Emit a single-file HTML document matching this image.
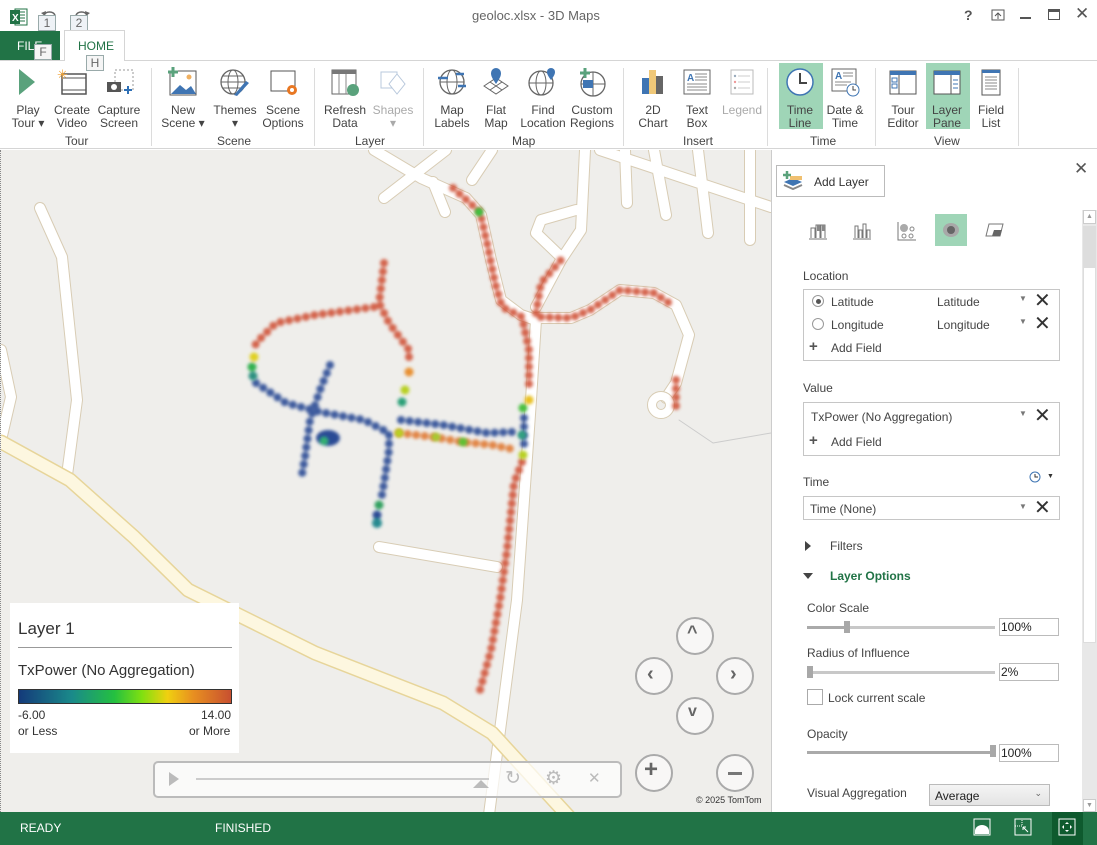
<!DOCTYPE html>
<html><head><meta charset="utf-8"><style>
*{margin:0;padding:0;box-sizing:border-box}
body{width:1097px;height:845px;overflow:hidden;background:#fff;font-family:"Liberation Sans",sans-serif;color:#444;position:relative}
.a{position:absolute}
.t{position:absolute;font-size:12px;color:#444;white-space:nowrap}
.btn{position:absolute;top:64px;width:46px;text-align:center;font-size:12px;line-height:13px;color:#444}
.btn svg{display:block;margin:2px auto 6px}
.gl{position:absolute;top:134px;font-size:12px;color:#444}
.sep{position:absolute;top:68px;width:1px;height:78px;background:#dcdcdc}
.box{position:absolute;border:1px solid #c6c6c6;background:#fff}
.kt{position:absolute;border:1px solid #9aa;background:#eef2f6;font-size:12px;color:#666;text-align:center;line-height:14px}
.inp{position:absolute;border:1px solid #bbb;background:#fff;font-size:12px;color:#222;padding:2px 1px;line-height:13px}
.sl{position:absolute;height:3px;background:#c8c8c8}
.th{position:absolute;width:6px;height:12px;background:#a8a8a8}
.nav{position:absolute;width:38px;height:38px;border-radius:50%;border:2px solid #aaa;background:rgba(255,255,255,.55)}
</style></head><body>

<svg class="a" style="left:9px;top:7px" width="20" height="20" viewBox="0 0 20 20"><rect x="6" y="2" width="12" height="16" fill="#fff" stroke="#217346"/><path d="M10 5h6M10 8h6M10 11h6M10 14h6" stroke="#217346"/><rect x="1" y="3" width="10" height="14" fill="#217346"/><text x="3" y="14" font-size="10" fill="#fff" font-family="Liberation Sans" font-weight="bold">X</text></svg>
<svg class="a" style="left:40px;top:6px" width="18" height="12"><path d="M4 9 A6 5 0 0 1 15 9" fill="none" stroke="#666" stroke-width="1.6"/><path d="M1 7l4 3 1-5z" fill="#666"/></svg>
<svg class="a" style="left:73px;top:6px" width="18" height="12"><path d="M3 9 A6 5 0 0 1 14 9" fill="none" stroke="#666" stroke-width="1.6"/><path d="M17 7l-4 3-1-5z" fill="#666"/></svg>
<div class="kt" style="left:38px;top:15px;width:18px;height:16px">1</div>
<div class="kt" style="left:70px;top:15px;width:18px;height:16px">2</div>
<div class="t" style="left:472px;top:8px;font-size:13px;color:#666">geoloc.xlsx - 3D Maps</div>
<div class="t" style="left:964px;top:7px;font-size:14px;color:#555;font-weight:bold">?</div>
<svg class="a" style="left:991px;top:9px" width="14" height="12"><rect x="1" y="1" width="12" height="10" fill="none" stroke="#555"/><path d="M4 7l3-3 3 3M7 4v6" stroke="#555" fill="none"/></svg>
<div class="a" style="left:1020px;top:17px;width:11px;height:2px;background:#555"></div>
<div class="a" style="left:1048px;top:9px;width:12px;height:11px;border:1.5px solid #555;border-top-width:3px"></div>
<div class="t" style="left:1075px;top:4px;font-size:17px;color:#555">✕</div>

<div class="a" style="left:0;top:31px;width:60px;height:30px;background:#217346"></div>
<div class="t" style="left:17px;top:39px;color:#fff;font-size:12px">FILE</div>
<div class="kt" style="left:34px;top:44px;width:18px;height:16px;background:#f5f5f5">F</div>
<div class="a" style="left:64px;top:30px;width:61px;height:31px;border:1px solid #d5d5d5;border-bottom:none;background:#fff"></div>
<div class="t" style="left:78px;top:39px;color:#217346">HOME</div>
<div class="kt" style="left:86px;top:55px;width:18px;height:16px;background:#f5f5f5">H</div>
<div class="a" style="left:125px;top:60px;width:972px;height:1px;background:#d5d5d5"></div>
<div class="a" style="left:0;top:60px;width:64px;height:1px;background:#d5d5d5"></div>

<div class="a" style="left:779px;top:63px;width:44px;height:66px;background:#9fd5b7"></div>
<div class="a" style="left:926px;top:63px;width:44px;height:66px;background:#9fd5b7"></div>

<div class="btn" style="left:5px"><svg width="32" height="32"><path d="M7 3l16 13-16 13z" fill="#5aa27c"/></svg>Play<br>Tour ▾</div>
<div class="btn" style="left:49px"><svg width="32" height="32"><rect x="6" y="8" width="24" height="20" fill="#fff" stroke="#555" stroke-width="1.5"/><path d="M6 12h24M6 24h24" stroke="#555"/><text x="1" y="13" font-size="13" fill="#f0a030">✳</text></svg>Create<br>Video</div>
<div class="btn" style="left:96px"><svg width="32" height="32"><rect x="12" y="4" width="18" height="20" fill="none" stroke="#999" stroke-dasharray="2 2"/><rect x="4" y="16" width="14" height="10" fill="#555"/><circle cx="11" cy="21" r="3" fill="#fff"/><path d="M25 20v8M21 24h8" stroke="#2e6fb5" stroke-width="2"/></svg>Capture<br>Screen</div>
<div class="sep" style="left:151px"></div>
<div class="btn" style="left:160px"><svg width="32" height="32"><rect x="3" y="5" width="26" height="24" fill="#fff" stroke="#555"/><path d="M4 28l9-9 6 5 5-4 5 8z" fill="#3f75b3"/><circle cx="22" cy="11" r="2.5" fill="#f0b060"/><path d="M6 1v10M1 6h10" stroke="#5aa27c" stroke-width="3"/></svg>New<br>Scene ▾</div>
<div class="btn" style="left:212px"><svg width="32" height="32"><circle cx="14" cy="16" r="12" fill="none" stroke="#666" stroke-width="1.3"/><ellipse cx="14" cy="16" rx="5" ry="12" fill="none" stroke="#666"/><path d="M2 16h24M4 10h20M4 22h20" stroke="#666"/><path d="M15 29l12-14 3 2-12 13z" fill="#3f75b3"/></svg>Themes<br>▾</div>
<div class="btn" style="left:260px"><svg width="32" height="32"><rect x="4" y="5" width="24" height="20" fill="#fff" stroke="#555"/><circle cx="25" cy="24" r="5" fill="#e87722"/><circle cx="25" cy="24" r="2" fill="#fff"/></svg>Scene<br>Options</div>
<div class="sep" style="left:314px"></div>
<div class="btn" style="left:322px"><svg width="32" height="32"><rect x="3" y="4" width="24" height="24" fill="#fff" stroke="#666"/><rect x="3" y="4" width="24" height="4" fill="#777"/><path d="M10 8v20M17 8v20" stroke="#888"/><circle cx="24" cy="24" r="6" fill="#5aa27c"/></svg>Refresh<br>Data</div>
<div class="btn" style="left:370px;color:#aaa"><svg width="32" height="32"><rect x="4" y="6" width="16" height="16" fill="none" stroke="#b8c8dc"/><path d="M20 8l8 10-8 10-8-10z" fill="#fff" stroke="#b8c8dc"/></svg>Shapes<br>▾</div>
<div class="sep" style="left:423px"></div>
<div class="btn" style="left:429px"><svg width="32" height="32"><circle cx="16" cy="16" r="12" fill="none" stroke="#666" stroke-width="1.3"/><ellipse cx="16" cy="16" rx="5" ry="12" fill="none" stroke="#666"/><path d="M4 16h24" stroke="#666"/><path d="M2 12h10M20 8h8M22 20h8" stroke="#3f75b3" stroke-width="2.5"/></svg>Map<br>Labels</div>
<div class="btn" style="left:473px"><svg width="32" height="32"><path d="M4 20l12-8 12 8-12 8z" fill="#fff" stroke="#666"/><path d="M10 16l12 8M22 16l-12 8" stroke="#666"/><path d="M16 18c-4-6-5-8-5-11a5 5 0 0 1 10 0c0 3-1 5-5 11z" fill="#3f75b3"/></svg>Flat<br>Map</div>
<div class="btn" style="left:520px"><svg width="32" height="32"><circle cx="14" cy="17" r="12" fill="none" stroke="#666" stroke-width="1.3"/><ellipse cx="14" cy="17" rx="5" ry="12" fill="none" stroke="#666"/><path d="M2 17h24" stroke="#666"/><path d="M24 14c-3-4-4-6-4-8a4 4 0 0 1 8 0c0 2-1 4-4 8z" fill="#3f75b3"/></svg>Find<br>Location</div>
<div class="btn" style="left:569px"><svg width="32" height="32"><circle cx="17" cy="18" r="12" fill="none" stroke="#666" stroke-width="1.3"/><path d="M5 18h24M17 6v24" stroke="#666"/><path d="M7 14h10v8H7z" fill="#3f75b3"/><path d="M9 2v10M4 7h10" stroke="#5aa27c" stroke-width="3"/></svg>Custom<br>Regions</div>
<div class="sep" style="left:623px"></div>
<div class="btn" style="left:630px"><svg width="32" height="32"><rect x="5" y="12" width="7" height="16" fill="#3f75b3"/><rect x="12" y="4" width="7" height="24" fill="#f0c878"/><rect x="19" y="10" width="7" height="18" fill="#666"/></svg>2D<br>Chart</div>
<div class="btn" style="left:674px"><svg width="32" height="32"><rect x="3" y="4" width="26" height="24" fill="#fff" stroke="#666"/><text x="6" y="15" font-size="10" fill="#3f75b3" font-weight="bold" font-family="Liberation Sans">A</text><path d="M14 8h12M14 11h12M14 14h12M6 18h20M6 21h20M6 24h20" stroke="#888"/></svg>Text<br>Box</div>
<div class="btn" style="left:719px;color:#aaa"><svg width="32" height="32"><rect x="5" y="4" width="22" height="24" fill="#fff" stroke="#bbb"/><path d="M12 10h12M12 16h12M12 22h12" stroke="#ccc"/><circle cx="9" cy="10" r="1.2" fill="#9ab"/><circle cx="9" cy="16" r="1.2" fill="#e99"/><circle cx="9" cy="22" r="1.2" fill="#aaa"/></svg>Legend</div>
<div class="sep" style="left:767px"></div>
<div class="btn" style="left:777px"><svg width="32" height="32"><circle cx="16" cy="16" r="13" fill="#fff" stroke="#3f75b3" stroke-width="1.5"/><path d="M16 7v10h7" stroke="#444" stroke-width="2" fill="none"/></svg>Time<br>Line</div>
<div class="btn" style="left:822px"><svg width="32" height="32"><rect x="3" y="3" width="24" height="22" fill="#fff" stroke="#666"/><text x="6" y="13" font-size="10" fill="#3f75b3" font-weight="bold" font-family="Liberation Sans">A</text><path d="M14 7h10M14 10h10M6 16h16M6 19h12" stroke="#888"/><circle cx="24" cy="24" r="6" fill="#fff" stroke="#3f75b3"/><path d="M24 20v4h3" stroke="#444" fill="none"/></svg>Date &amp;<br>Time</div>
<div class="sep" style="left:875px"></div>
<div class="btn" style="left:880px"><svg width="32" height="32"><rect x="3" y="5" width="26" height="23" fill="#fff" stroke="#555"/><rect x="3" y="5" width="26" height="4" fill="#3f75b3"/><path d="M12 9v19" stroke="#555"/><rect x="5" y="12" width="5" height="4" fill="none" stroke="#3f75b3"/><rect x="5" y="18" width="5" height="4" fill="none" stroke="#3f75b3"/></svg>Tour<br>Editor</div>
<div class="btn" style="left:924px"><svg width="32" height="32"><rect x="3" y="5" width="26" height="23" fill="#fff" stroke="#555"/><rect x="3" y="5" width="26" height="4" fill="#3f75b3"/><path d="M20 9v19" stroke="#555"/><path d="M22 14h5M22 18h5M22 22h5" stroke="#3f75b3"/></svg>Layer<br>Pane</div>
<div class="btn" style="left:968px"><svg width="32" height="32"><rect x="7" y="4" width="18" height="25" fill="#fff" stroke="#555"/><rect x="7" y="4" width="18" height="3" fill="#3f75b3"/><path d="M10 11h12M10 14h12M10 17h12M10 20h12M10 23h12" stroke="#888"/></svg>Field<br>List</div>
<div class="sep" style="left:1018px"></div>

<div class="gl" style="left:65px">Tour</div>
<div class="gl" style="left:217px">Scene</div>
<div class="gl" style="left:355px">Layer</div>
<div class="gl" style="left:512px">Map</div>
<div class="gl" style="left:683px">Insert</div>
<div class="gl" style="left:810px">Time</div>
<div class="gl" style="left:934px">View</div>
<div class="a" style="left:0;top:148px;width:1097px;height:1px;background:#d5d5d5"></div>

<div class="a" style="left:0;top:150px;width:771px;height:662px;overflow:hidden;background:#efeeeb;border-left:1px dotted #888">
<svg class="a" style="left:0;top:-150px" width="1097" height="845" viewBox="0 0 1097 845">
<defs><filter id="b" x="-20%" y="-20%" width="140%" height="140%"><feGaussianBlur stdDeviation="1.5"/></filter></defs>
<g fill="none" stroke-linecap="round" stroke-linejoin="round">
<g stroke="#d8ccb4" stroke-width="12">
<path d="M39 208L61 257L76 400L66 475"/>
<path d="M373 150L420 178L465 198L480 215L490 260L500 300L520 315L535 320L530 400L516 600L486 830"/>
<path d="M383 198L445 150M432 182L444 212M471 180L491 150"/>
<path d="M584 150L580 230L560 260L535 307M560 257L535 233L540 220L575 210"/>
<path d="M535 318L570 318L589 310L619 290L653 293L675 305L688 335L675 383L665 398"/>
<path d="M624 150L626 203M653 150L665 215M697 150L707 233M749 150L749 240M599 150L770 207"/>
<path d="M378 547L496 567"/>
<path d="M0 350L10 397L0 440"/>
</g>
<g stroke="#fff" stroke-width="10">
<path d="M39 208L61 257L76 400L66 475"/>
<path d="M373 150L420 178L465 198L480 215L490 260L500 300L520 315L535 320L530 400L516 600L486 830"/>
<path d="M383 198L445 150M432 182L444 212M471 180L491 150"/>
<path d="M584 150L580 230L560 260L535 307M560 257L535 233L540 220L575 210"/>
<path d="M535 318L570 318L589 310L619 290L653 293L675 305L688 335L675 383L665 398"/>
<path d="M624 150L626 203M653 150L665 215M697 150L707 233M749 150L749 240M599 150L770 207"/>
<path d="M378 547L496 567"/>
<path d="M0 350L10 397L0 440"/>
</g>
<circle cx="660" cy="405" r="9" stroke="#d8ccb4" stroke-width="10"/><circle cx="660" cy="405" r="9" stroke="#fff" stroke-width="8"/>
<path d="M678 420L712 443L770 433" stroke="#ccc" stroke-width="1"/>
<path d="M0 442L69 480L133 537L187 590L314 653L442 703L491 733L580 830" stroke="#e7d59a" stroke-width="15"/>
<path d="M0 442L69 480L133 537L187 590L314 653L442 703L491 733L580 830" stroke="#fdf7e0" stroke-width="12"/>
</g>
<g fill="none" stroke-linecap="round" stroke-linejoin="round" stroke-width="8" stroke-dasharray="0.1 8.5" filter="url(#b)" opacity="0.9">
<path stroke="#d0553a" d="M452 188L479 212L486 243L494 283L501 307L521 317L528 350L528 392"/>
<path stroke="#2b4b95" d="M523 418L523 445"/>
<path stroke="#d0553a" d="M521 462L513 483L506 550L499 600L490 650L479 690"/>
<path stroke="#d0553a" d="M535 313L540 283L560 260"/>
<path stroke="#d0553a" d="M540 317L570 318L589 310L619 290L653 293L668 303"/>
<path stroke="#d0553a" d="M675 380L675 410"/>
<path stroke="#d0553a" d="M383 263L378 303L388 323L408 350L408 362"/>
<path stroke="#2b4b95" d="M400 420L442 425L486 433L511 432"/>
<path stroke="#e07a35" d="M398 433L432 437L462 442L491 445L516 450"/>
<path stroke="#d0553a" d="M373 307L314 315L275 323L255 343L253 352"/>
<path stroke="#2b4b95" d="M255 383L285 403L319 412L363 420L388 433L388 450L383 483L380 500"/>
<path stroke="#2b4b95" d="M329 365L319 390L309 420L304 457L300 480"/>
</g>
<g filter="url(#b)">
<circle cx="528" cy="400" r="4.5" fill="#e9c020"/><circle cx="522" cy="408" r="4.5" fill="#49c040"/><circle cx="522" cy="455" r="4.5" fill="#b8d020"/>
<circle cx="408" cy="372" r="4.5" fill="#e89030"/><circle cx="404" cy="390" r="4.5" fill="#b8d020"/><circle cx="401" cy="402" r="4.5" fill="#2aa078"/>
<circle cx="398" cy="433" r="4.5" fill="#b8d020"/><circle cx="462" cy="442" r="4.5" fill="#60c030"/><circle cx="435" cy="437" r="4.5" fill="#a8c830"/>
<circle cx="253" cy="357" r="4.5" fill="#e0d020"/><circle cx="251" cy="367" r="4.5" fill="#30b050"/><circle cx="252" cy="376" r="4.5" fill="#2a9080"/>
<circle cx="378" cy="505" r="4.5" fill="#30a060"/><circle cx="376" cy="515" r="4.5" fill="#2a4b95"/><circle cx="376" cy="523" r="5" fill="#258a90"/>
<circle cx="478" cy="212" r="4.5" fill="#40c040"/>
<ellipse cx="327" cy="438" rx="12" ry="8" fill="#2b4b95"/><circle cx="323" cy="441" r="4" fill="#30b070"/>
<circle cx="521" cy="435" r="4.5" fill="#30a080"/>
</g>
</svg>

<div class="a" style="left:9px;top:453px;width:229px;height:150px;background:#fff"></div>
<div class="t" style="left:17px;top:469px;font-size:17px;color:#333">Layer 1</div>
<div class="a" style="left:17px;top:497px;width:214px;height:1px;background:#999"></div>
<div class="t" style="left:17px;top:512px;font-size:15px;color:#333">TxPower (No Aggregation)</div>
<div class="a" style="left:17px;top:539px;width:214px;height:15px;border:1px solid #333;background:linear-gradient(90deg,#143a7a,#1a8a8a 25%,#24c040 45%,#80e010 58%,#f0d010 70%,#e89020 82%,#c85030)"></div>
<div class="t" style="left:17px;top:558px;color:#333">-6.00</div>
<div class="t" style="left:17px;top:574px;color:#333">or Less</div>
<div class="t" style="left:200px;top:558px;color:#333">14.00</div>
<div class="t" style="left:188px;top:574px;color:#333">or More</div>

<div class="nav" style="left:675px;top:467px"></div><div class="t" style="left:686px;top:472px;font-size:18px;color:#666;font-weight:bold">^</div>
<div class="nav" style="left:634px;top:507px"></div><div class="t" style="left:646px;top:513px;font-size:20px;color:#666;font-weight:bold">‹</div>
<div class="nav" style="left:715px;top:507px"></div><div class="t" style="left:729px;top:513px;font-size:20px;color:#666;font-weight:bold">›</div>
<div class="nav" style="left:675px;top:547px"></div><div class="t" style="left:687px;top:553px;font-size:16px;color:#666;font-weight:bold">v</div>
<div class="nav" style="left:634px;top:604px"></div><div class="t" style="left:643px;top:606px;font-size:24px;color:#666;font-weight:bold">+</div>
<div class="nav" style="left:715px;top:604px"></div><div class="a" style="left:727px;top:622px;width:14px;height:3px;background:#777"></div>
<div class="t" style="left:695px;top:645px;font-size:9px;color:#333">© 2025 TomTom</div>

<div class="a" style="left:152px;top:611px;width:469px;height:37px;border:2px solid #bbb;border-radius:5px;background:rgba(255,255,255,.7)"></div>
<div class="a" style="left:168px;top:622px;width:0;height:0;border-left:10px solid #bbb;border-top:7px solid transparent;border-bottom:7px solid transparent"></div>
<div class="a" style="left:195px;top:628px;width:293px;height:2px;background:#ccc"></div>
<div class="a" style="left:472px;top:630px;width:0;height:0;border-bottom:8px solid #bbb;border-left:8px solid transparent;border-right:8px solid transparent"></div>
<div class="t" style="left:504px;top:617px;font-size:19px;color:#bbb">↻</div>
<div class="t" style="left:544px;top:617px;font-size:19px;color:#bbb">⚙</div>
<div class="t" style="left:587px;top:619px;font-size:15px;color:#bbb">✕</div>
</div>
<div class="a" style="left:771px;top:150px;width:1px;height:662px;background:#ccc"></div>

<div class="box" style="left:776px;top:165px;width:109px;height:32px;border-color:#bbb"></div>
<svg class="a" style="left:782px;top:170px" width="22" height="20"><path d="M2 12l9-4 9 4-9 4z" fill="#3f75b3"/><path d="M2 15l9 4 9-4" stroke="#888" fill="none" stroke-width="2"/><path d="M8 6h12v4H8z" fill="#f0c070"/><path d="M5 1v8M1 5h8" stroke="#5aa27c" stroke-width="2.5"/></svg>
<div class="t" style="left:814px;top:175px;font-size:12px;color:#333">Add Layer</div>
<div class="t" style="left:1074px;top:159px;font-size:17px;color:#555">✕</div>

<div class="a" style="left:1082px;top:210px;width:15px;height:602px;background:#e8e8e8"></div>
<div class="a" style="left:1083px;top:226px;width:13px;height:417px;background:#fff;border:1px solid #ddd"></div>
<div class="a" style="left:1083px;top:226px;width:13px;height:42px;background:#ddd"></div>
<div class="a" style="left:1083px;top:210px;width:13px;height:14px;background:#fff;border:1px solid #ccc;font-size:7px;color:#999;text-align:center;line-height:12px">▲</div>
<div class="a" style="left:1083px;top:799px;width:13px;height:13px;background:#fff;border:1px solid #ccc;font-size:7px;color:#999;text-align:center;line-height:12px">▼</div>

<svg class="a" style="left:808px;top:221px" width="20" height="20"><path d="M1 18h18M3 17V7h4v10M8 17V4h4v13M13 17V4h4v13" stroke="#777" fill="none"/><rect x="9" y="4" width="3" height="6" fill="#888"/><rect x="14" y="4" width="3" height="6" fill="#888"/></svg>
<svg class="a" style="left:852px;top:221px" width="20" height="20"><path d="M1 18h18M3 17V5h3v12M7 17V9h3v8M11 17V3h3v14M15 17V9h3v8" stroke="#777" fill="none"/></svg>
<svg class="a" style="left:897px;top:221px" width="20" height="20"><path d="M1 1v18h18" stroke="#777" fill="none"/><circle cx="7" cy="7" r="4" fill="#aaa"/><circle cx="15" cy="8" r="2" fill="none" stroke="#888"/><circle cx="7" cy="15" r="2" fill="none" stroke="#888"/><circle cx="14" cy="15" r="2" fill="none" stroke="#888"/></svg>
<div class="a" style="left:935px;top:214px;width:32px;height:32px;background:#9fd5b7"></div>
<svg class="a" style="left:941px;top:220px" width="20" height="20"><ellipse cx="10" cy="10" rx="8" ry="7" fill="#a8a8a8"/><ellipse cx="10" cy="10" rx="4" ry="4" fill="#666"/></svg>
<svg class="a" style="left:985px;top:222px" width="20" height="16"><path d="M4 2h14l-3 12H1z" fill="#fff" stroke="#777"/><path d="M9 8h8l-2 6H7z" fill="#666"/></svg>

<div class="t" style="left:803px;top:269px">Location</div>
<div class="box" style="left:803px;top:289px;width:257px;height:72px"></div>
<div class="a" style="left:812px;top:295px;width:12px;height:12px;border:1px solid #999;border-radius:50%"></div>
<div class="a" style="left:815.5px;top:298.5px;width:5px;height:5px;background:#555;border-radius:50%"></div>
<div class="t" style="left:831px;top:295px">Latitude</div><div class="t" style="left:937px;top:295px">Latitude</div>
<div class="t" style="left:1019px;top:294px;font-size:8px;color:#777">▼</div><div class="t" style="left:1034px;top:288px;font-size:20px;color:#333">✕</div>
<div class="a" style="left:812px;top:318px;width:12px;height:12px;border:1px solid #999;border-radius:50%"></div>
<div class="t" style="left:831px;top:318px">Longitude</div><div class="t" style="left:937px;top:318px">Longitude</div>
<div class="t" style="left:1019px;top:317px;font-size:8px;color:#777">▼</div><div class="t" style="left:1034px;top:311px;font-size:20px;color:#333">✕</div>
<div class="t" style="left:809px;top:338px;font-size:15px;color:#555;font-weight:bold">+</div><div class="t" style="left:831px;top:341px">Add Field</div>

<div class="t" style="left:803px;top:381px">Value</div>
<div class="box" style="left:803px;top:402px;width:257px;height:54px"></div>
<div class="t" style="left:811px;top:410px">TxPower (No Aggregation)</div>
<div class="t" style="left:1019px;top:409px;font-size:8px;color:#777">▼</div><div class="t" style="left:1034px;top:403px;font-size:20px;color:#333">✕</div>
<div class="t" style="left:809px;top:432px;font-size:15px;color:#555;font-weight:bold">+</div><div class="t" style="left:831px;top:435px">Add Field</div>

<div class="t" style="left:803px;top:475px">Time</div>
<svg class="a" style="left:1029px;top:471px" width="12" height="12"><circle cx="6" cy="6" r="5" fill="none" stroke="#3f75b3"/><path d="M6 3v3h3" stroke="#333" fill="none"/></svg>
<div class="t" style="left:1047px;top:473px;font-size:7px;color:#333">▼</div>
<div class="box" style="left:803px;top:496px;width:257px;height:24px"></div>
<div class="t" style="left:810px;top:502px">Time (None)</div>
<div class="t" style="left:1019px;top:502px;font-size:8px;color:#777">▼</div><div class="t" style="left:1034px;top:495px;font-size:20px;color:#333">✕</div>

<div class="a" style="left:805px;top:541px;width:0;height:0;border-left:6px solid #444;border-top:5px solid transparent;border-bottom:5px solid transparent"></div>
<div class="t" style="left:830px;top:539px">Filters</div>
<div class="a" style="left:803px;top:573px;width:0;height:0;border-top:6px solid #444;border-left:5px solid transparent;border-right:5px solid transparent"></div>
<div class="t" style="left:830px;top:569px;color:#217346;font-weight:bold">Layer Options</div>

<div class="t" style="left:807px;top:601px">Color Scale</div>
<div class="sl" style="left:807px;top:626px;width:188px"></div><div class="sl" style="left:807px;top:626px;width:40px;background:#aaa"></div>
<div class="th" style="left:844px;top:621px"></div>
<div class="inp" style="left:999px;top:618px;width:60px;height:18px">100%</div>
<div class="t" style="left:807px;top:646px">Radius of Influence</div>
<div class="sl" style="left:807px;top:671px;width:188px"></div>
<div class="th" style="left:807px;top:666px"></div>
<div class="inp" style="left:999px;top:663px;width:60px;height:18px">2%</div>
<div class="a" style="left:807px;top:689px;width:16px;height:16px;border:1px solid #aaa"></div>
<div class="t" style="left:828px;top:691px">Lock current scale</div>
<div class="t" style="left:807px;top:727px">Opacity</div>
<div class="sl" style="left:807px;top:751px;width:188px;background:#aaa"></div>
<div class="th" style="left:990px;top:745px"></div>
<div class="inp" style="left:999px;top:744px;width:60px;height:18px">100%</div>
<div class="t" style="left:807px;top:786px">Visual Aggregation</div>
<div class="a" style="left:929px;top:784px;width:121px;height:22px;border:1px solid #bbb;background:linear-gradient(#f4f4f4,#e4e4e4);font-size:12px;color:#222;padding:4px 5px">Average<span style="position:absolute;right:7px;top:3px;font-size:9px;color:#666">⌄</span></div>

<div class="a" style="left:0;top:812px;width:1097px;height:33px;background:#217346"></div>
<div class="t" style="left:20px;top:821px;color:#fff">READY</div>
<div class="t" style="left:215px;top:821px;color:#fff">FINISHED</div>
<svg class="a" style="left:973px;top:818px" width="18" height="18"><rect x="1" y="1" width="16" height="16" fill="none" stroke="#fff"/><path d="M2 16v-3a7 6 0 0 1 14 0v3z" fill="#fff"/></svg>
<svg class="a" style="left:1014px;top:818px" width="18" height="18"><rect x="1" y="1" width="16" height="16" fill="none" stroke="#fff"/><rect x="1" y="1" width="7" height="7" fill="none" stroke="#fff" stroke-dasharray="1 1"/><path d="M9 9l5 5M9 9h3M9 9v3" stroke="#fff"/></svg>
<div class="a" style="left:1052px;top:812px;width:31px;height:33px;background:#0e5a2e"></div>
<svg class="a" style="left:1058px;top:818px" width="18" height="18"><rect x="1" y="1" width="16" height="16" fill="none" stroke="#fff"/><path d="M9 4l2 2H7zM9 14l2-2H7zM4 9l2-2v4zM14 9l-2-2v4z" fill="#fff"/></svg>
</body></html>
